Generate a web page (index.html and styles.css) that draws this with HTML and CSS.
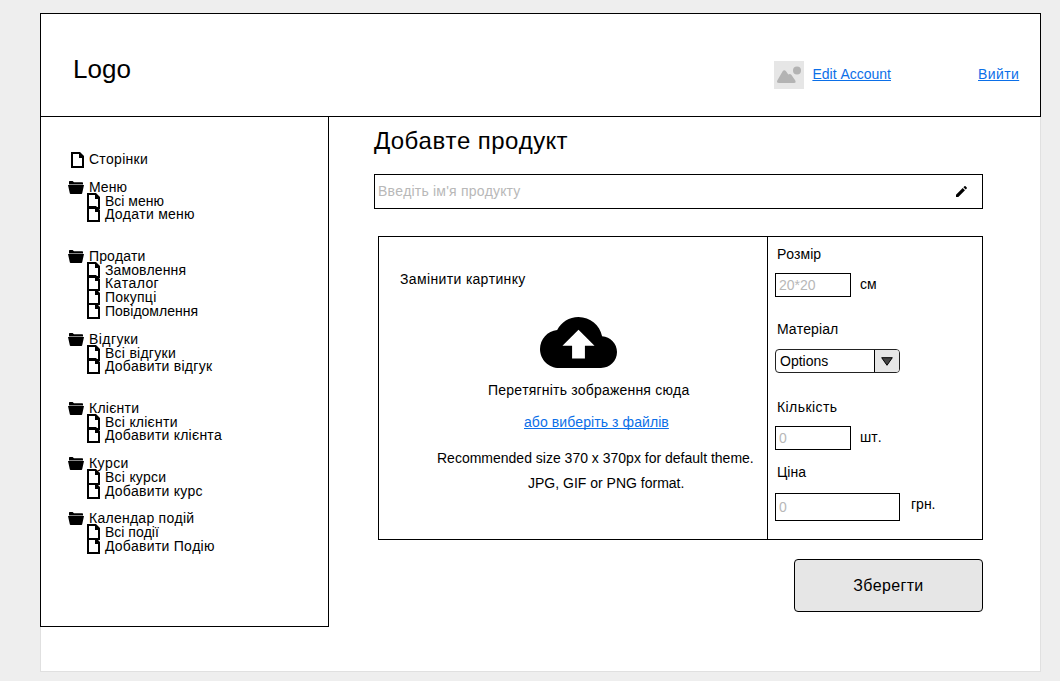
FILE: index.html
```
<!DOCTYPE html>
<html lang="uk">
<head>
<meta charset="utf-8">
<title>Добавте продукт</title>
<link rel="stylesheet" href="styles.css">
</head>
<body>
<svg class="sprite" aria-hidden="true">
  <symbol id="page" viewBox="0 0 13 16"><path fill-rule="evenodd" d="M0 0h9l4 4v12H0zM2 2v12h9V6H8V2z"/></symbol>
  <symbol id="folder" viewBox="0 0 16 13"><path d="M1 3V.7Q1 0 1.700 0H4.600l1.400 1.200h8.300q.7 0 .7.700V3z"/><path d="M0 4h16l-1.800 8.300q-.1.700-.8.700H2.600q-.7 0-.8-.7z"/><path d="M1 3.500h14" stroke="#888"/></symbol>
</svg>
<div class="page">
  <header class="header">
    <div class="logo">Logo</div>
    <nav class="account">
      <svg class="avatar" viewBox="0 0 30 28"><path fill="#e6e6e6" d="M0 0h30v28H0z"/><circle cx="23" cy="9.600" r="4" fill="#b3b3b3"/><path fill="#b3b3b3" d="M3.300 19.500 8.500 10.500Q10.200 8 12 10.200l2.300 3.400q1.500-1.500 3 .2l4 5.700q1 2.500-1.300 2.500H5q-2.700 0-1.700-2.500z"/></svg>
      <a class="link" href="#">Edit Account</a>
      <a class="link logout" href="#">Вийти</a>
    </nav>
  </header>
  <div class="body">
    <aside class="sidebar">
      <ul class="tree">
        <li class="root single loose"><svg class="doc"><use href="#page"/></svg>Сторінки</li>
        <li class="gap1"></li>
        <li class="root snug"><svg class="folder"><use href="#folder"/></svg>Меню</li>
        <li class="child"><svg class="doc"><use href="#page"/></svg>Всі меню</li>
        <li class="child loose"><svg class="doc"><use href="#page"/></svg>Додати меню</li>
        <li class="gap2"></li>
        <li class="root snug"><svg class="folder"><use href="#folder"/></svg>Продати</li>
        <li class="child snug"><svg class="doc"><use href="#page"/></svg>Замовлення</li>
        <li class="child wider"><svg class="doc"><use href="#page"/></svg>Каталог</li>
        <li class="child loose"><svg class="doc"><use href="#page"/></svg>Покупці</li>
        <li class="child"><svg class="doc"><use href="#page"/></svg>Повідомлення</li>
        <li class="gap1"></li>
        <li class="root wider"><svg class="folder"><use href="#folder"/></svg>Відгуки</li>
        <li class="child loose"><svg class="doc"><use href="#page"/></svg>Всі відгуки</li>
        <li class="child loose"><svg class="doc"><use href="#page"/></svg>Добавити відгук</li>
        <li class="gap2"></li>
        <li class="root loose"><svg class="folder"><use href="#folder"/></svg>Клієнти</li>
        <li class="child loose"><svg class="doc"><use href="#page"/></svg>Всі клієнти</li>
        <li class="child loose"><svg class="doc"><use href="#page"/></svg>Добавити клієнта</li>
        <li class="gap1"></li>
        <li class="root wider"><svg class="folder"><use href="#folder"/></svg>Курси</li>
        <li class="child loose"><svg class="doc"><use href="#page"/></svg>Всі курси</li>
        <li class="child loose"><svg class="doc"><use href="#page"/></svg>Добавити курс</li>
        <li class="gap1"></li>
        <li class="root loose"><svg class="folder"><use href="#folder"/></svg>Календар подій</li>
        <li class="child"><svg class="doc"><use href="#page"/></svg>Всі події</li>
        <li class="child loose"><svg class="doc"><use href="#page"/></svg>Добавити Подію</li>
      </ul>
    </aside>
    <main class="main">
      <h1 class="title">Добавте продукт</h1>
      <div class="name-field">
        <span>Введіть ім'я продукту</span>
        <svg class="pencil" viewBox="0 0 11 11"><path d="M0 8.700 6.700 2l2.300 2.300L2.300 11H0zM7.400 1.300 8.400.3q.6-.6 1.200 0l1.100 1.100q.6.600 0 1.200l-1 1z"/></svg>
      </div>
      <div class="panel">
        <section class="upload">
          <h2 class="upload-title">Замінити картинку</h2>
          <svg class="cloud" viewBox="0 4 24 16" preserveAspectRatio="none"><path d="M19.350 10.040C18.670 6.590 15.640 4 12 4 9.110 4 6.600 5.640 5.350 8.040 2.340 8.360 0 10.910 0 14c0 3.310 2.690 6 6 6h13c2.760 0 5-2.240 5-5 0-2.640-2.050-4.780-4.650-4.960zM14 13v4h-4v-4H7l5-5 5 5h-3z"/></svg>
          <p class="drop">Перетягніть зображення сюда</p>
          <p class="pick"><a class="link" href="#">або виберіть з файлів</a></p>
          <p class="hint">Recommended size 370 x 370px for default theme.</p>
          <p class="hint formats">JPG, GIF or PNG format.</p>
        </section>
        <section class="props">
          <div class="label size">Розмір</div>
          <div class="row"><div class="input">20*20</div><span class="unit">см</span></div>
          <div class="label material snug">Матеріал</div>
          <div class="select"><span class="value">Options</span><span class="arrow"><svg width="12" height="9" viewBox="0 0 12 9"><path d="M.7.700h10.600L6 8.300z" fill="#444" stroke="#000" stroke-linejoin="round"/></svg></span></div>
          <div class="label count wider">Кількість</div>
          <div class="row"><div class="input">0</div><span class="unit">шт.</span></div>
          <div class="label price">Ціна</div>
          <div class="row"><div class="input wide">0</div><span class="unit far">грн.</span></div>
        </section>
      </div>
      <button class="save">Зберегти</button>
    </main>
  </div>
</div>
</body>
</html>
```
FILE: styles.css
```
* { box-sizing: border-box; }
body {
  margin: 0;
  height: 681px;
  padding: 13px 0 0 40px;
  overflow: hidden;
  background: #eee;
  color: #000;
  font: 14px/16px "Liberation Sans", Arial, sans-serif;
  font-kerning: none;
}
h1, h2, p, ul { margin: 0; padding: 0; font-weight: 400; }
svg { display: block; flex: none; }
.sprite { display: none; }
.snug { letter-spacing: .1px; }
.loose { letter-spacing: .26px; }
.wider { letter-spacing: .42px; }
.page {
  width: 1001px;
  height: 659px;
  border: 1px solid #e0e0e0;
  background: #fff;
}
.header {
  display: flex;
  align-items: flex-start;
  justify-content: space-between;
  width: 1001px;
  height: 104px;
  margin: -1px 0 0 -1px;
  padding: 0 20px 0 32px;
  border: 1px solid #000;
}
.logo { margin-top: 40px; font-size: 26px; line-height: 30px; }
.account { display: flex; align-items: center; margin-top: 47px; height: 28px; }
.avatar { width: 30px; height: 28px; margin-right: 8px; }
.account .link { margin-top: -2px; }
.account .logout { width: 42px; margin-left: 87px; letter-spacing: .4px; }
.link { color: #0b6fe8; text-decoration: underline; text-underline-offset: 1px; text-decoration-thickness: 1px; text-decoration-skip-ink: none; }
.body { display: flex; margin-left: -1px; }
.sidebar {
  flex: none;
  width: 289px;
  height: 511px;
  margin-top: -1px;
  padding: 35.180px 0 0 27px;
  border: 1px solid #000;
}
.tree { list-style: none; }
.tree li { display: flex; height: 13.820px; line-height: 14px; }
.tree .gap2 { height: 27.640px; }
.tree .single { padding-left: 3px; }
.tree .child { padding-left: 19px; }
.doc { width: 13px; height: 16px; margin-right: 5px; }
.child .doc { margin-top: -1px; }
.folder { width: 16px; height: 13px; margin: 1px 5px 0 0; }
.main { width: 609px; margin-left: 45px; }
.title { margin-top: 10px; font-size: 24px; line-height: 28px; letter-spacing: .42px; }
.name-field {
  display: flex;
  align-items: center;
  justify-content: space-between;
  width: 609px;
  height: 35px;
  margin-top: 19px;
  padding: 0 15px 2px 3px;
  border: 1px solid #000;
  color: #b8b8b8;
  letter-spacing: .2px;
}
.pencil { width: 11px; height: 11px; margin-top: 2px; fill: #000; }
.panel { display: flex; width: 605px; height: 304px; margin: 27px 0 0 4px; border: 1px solid #000; }
.upload { width: 389px; padding: 34px 0 0 21px; border-right: 1px solid #000; }
.upload-title { font-size: 14px; letter-spacing: .36px; }
.cloud { width: 77px; height: 51px; margin: 30px 0 0 140px; }
.drop { margin: 14px 0 0 88px; letter-spacing: .19px; }
.pick { margin: 16px 0 0 124px; letter-spacing: .08px; }
.hint { margin: 16px 0 0 37px; line-height: 25px; white-space: nowrap; }
.formats { margin: 0 0 0 128px; }
.props { flex: 1; padding: 9px 0 0 7px; }
.label { padding-left: 2px; }
.row { display: flex; }
.input { width: 76px; height: 24px; padding: 3px; border: 1px solid #000; color: #b8b8b8; }
.input.wide { width: 125px; height: 28px; padding-top: 5px; }
.unit { margin: 3px 0 0 9px; }
.unit.far { margin-left: 11px; }
.size { margin-bottom: 11px; }
.material { margin: 24px 0 12px; }
.count { margin: 26px 0 11px; }
.price { margin: 14px 0 13px; }
.select { display: flex; width: 125px; height: 24px; border: 1px solid #222; border-radius: 4px; overflow: hidden; }
.value { flex: 1; padding: 3px 4px; }
.arrow { display: flex; align-items: center; justify-content: center; width: 25px; border-left: 1px solid #000; background: #e6e6e6; }
.save {
  display: block;
  width: 189px;
  height: 53px;
  margin: 19px 0 0 420px;
  padding: 0;
  border: 1px solid #000;
  border-radius: 4px;
  background: #e6e6e6;
  color: #000;
  font: 16px "Liberation Sans", Arial, sans-serif;
  letter-spacing: .36px;
}
```
